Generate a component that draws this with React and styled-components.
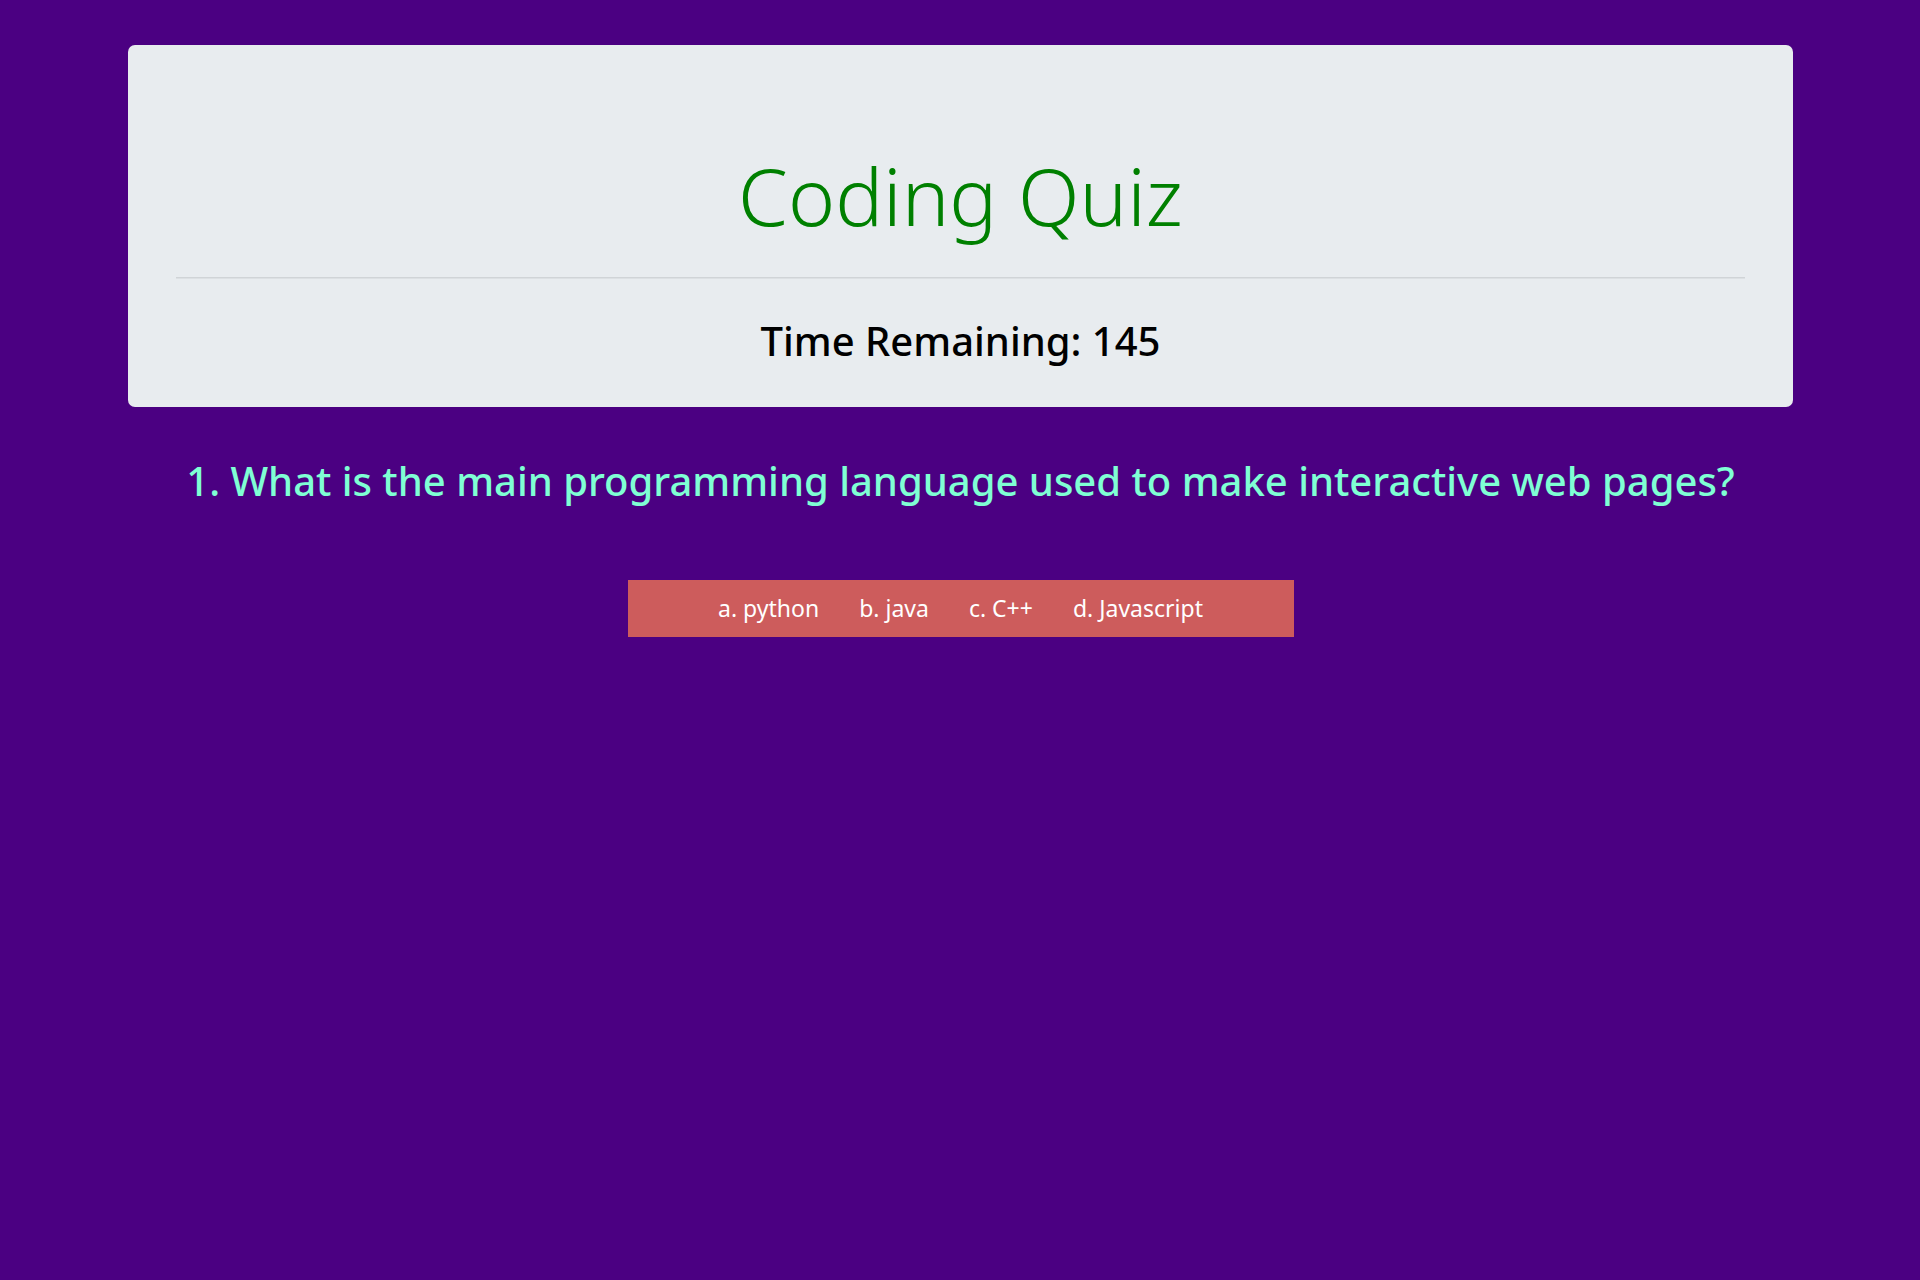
import React from "react";
import styled, { createGlobalStyle } from "styled-components";

const GlobalStyle = createGlobalStyle`
  *, *::before, *::after { box-sizing: border-box; }
  body {
    margin: 0;
    background: #4b0082;
    font-family: "Segoe UI", "Noto Sans", "Open Sans", sans-serif;
  }
`;

const Page = styled.main`
  display: flex;
  flex-direction: column;
  align-items: center;
  padding: 45px 127px 48px 128px;
  text-align: center;
`;

const Banner = styled.header`
  width: 100%;
  padding: 94px 48px 38px;
  border-radius: 7px;
  background: #e8ecef;
`;

const Title = styled.h1`
  margin: 0 0 26px;
  color: #008000;
  font-size: 80px;
  font-weight: 300;
  line-height: 112px;
`;

const Divider = styled.hr`
  height: 2px;
  margin: 0 0 34px;
  border: 0;
  border-top: 1px solid #d0d4d7;
  background: #dce0e3;
`;

const Heading = styled.h2`
  margin: 0;
  color: ${(p) => p.$color};
  font-size: 40px;
  font-weight: 500;
  line-height: 56px;
`;

const Question = styled.section`
  display: flex;
  flex-direction: column;
  align-items: center;
  gap: 71px;
  width: 100%;
  padding-top: 46px;
`;

const Options = styled.ul`
  display: flex;
  justify-content: center;
  gap: 40px;
  width: 40%;
  min-width: max-content;
  margin: 0;
  padding: 12px 24px;
  list-style: none;
  background: #cd5c5c;
`;

const Option = styled.button`
  display: block;
  padding: 0;
  border: 0;
  background: transparent;
  color: #ffffff;
  font-family: inherit;
  font-size: 23px;
  line-height: 33px;
  cursor: pointer;
`;

const options = ["a. python", "b. java", "c. C++", "d. Javascript"];

export default function App() {
  return (
    <>
      <GlobalStyle />
      <Page>
        <Banner>
          <Title>Coding Quiz</Title>
          <Divider />
          <Heading $color="#000000">Time Remaining: 145</Heading>
        </Banner>
        <Question>
          <Heading $color="#7fffd4">
            1. What is the main programming language used to make interactive web pages?
          </Heading>
          <Options>
            {options.map((label) => (
              <li key={label}>
                <Option type="button">{label}</Option>
              </li>
            ))}
          </Options>
        </Question>
      </Page>
    </>
  );
}
